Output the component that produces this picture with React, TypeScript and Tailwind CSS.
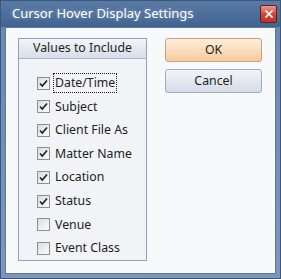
import { X } from "lucide-react";

const items = [
  { label: "Date/Time", checked: true, focused: true },
  { label: "Subject", checked: true },
  { label: "Client File As", checked: true },
  { label: "Matter Name", checked: true },
  { label: "Location", checked: true },
  { label: "Status", checked: true },
  { label: "Venue", checked: false },
  { label: "Event Class", checked: false },
];

const CheckBox = ({ checked }: { checked: boolean }) => (
  <div className="size-[13px] border border-[#8e8f8f] bg-gradient-to-br from-[#dcdcdc] to-[#fbfbfb] flex items-center justify-center">
    {checked && (
      <svg width="9" height="9" viewBox="0 0 9 9">
        <path d="M1 4.5 L3.3 7 L8 1.5" fill="none" stroke="#1f1f1f" strokeWidth="1.6" />
      </svg>
    )}
  </div>
);

export default function App() {
  return (
    <div
      className="w-[281px] h-[279px] flex flex-col bg-gradient-to-b from-[#6a87b0] to-[#7d97bc] border border-[#3c5678]"
      style={{ fontFamily: '"Noto Sans", "Open Sans", sans-serif' }}
    >
      <div className="h-[26px] flex items-center justify-between pl-[11px] pr-[3px] bg-gradient-to-b from-[#5a7aa6] to-[#40638f]">
        <span className="text-[13px] text-white [text-shadow:0_0_4px_rgba(255,255,255,0.4)]">
          Cursor Hover Display Settings
        </span>
        <div className="w-[17px] h-[18px] mb-[1px] rounded-[2px] border border-[#6e1b14] bg-gradient-to-b from-[#e89a8d] via-[#d2473a] to-[#c0322a] flex items-center justify-center">
          <X className="w-[12px] h-[12px] text-white" strokeWidth={3.5} />
        </div>
      </div>
      <div className="flex-1 mx-[4px] mb-[4px] bg-[#f7f9fb] border border-[#5f7699] flex gap-[18px] pl-[12px] pt-[10px]">
        <div className="w-[129px] h-[223px] border border-[#8ea2be] bg-[#f1f3f6] flex flex-col">
          <div className="h-[23px] border-b border-[#a8b6c9] bg-gradient-to-b from-[#f3f5f8] to-[#d7dee8] flex items-center justify-center text-[12.3px] text-[#1e1e1e]">
            Values to Include
          </div>
          <div className="pt-[12px] pl-[18px] flex flex-col">
            {items.map(({ label, checked, focused }) => (
              <div key={label} className="h-[23.6px] flex items-center gap-[4px]">
                <CheckBox checked={checked} />
                <span
                  className={`text-[12.3px] text-[#1e1e1e] leading-[16px] py-[1px] px-[1px] ${
                    focused ? "outline outline-1 outline-dotted outline-[#222]" : ""
                  }`}
                >
                  {label}
                </span>
              </div>
            ))}
          </div>
        </div>
        <div className="flex flex-col gap-[7px]">
          <button className="w-[97px] h-[24px] rounded-[3px] border border-[#c9a27a] bg-gradient-to-b from-[#fdeedf] to-[#f6cb9c] text-[12.3px] text-[#1e1e1e]">
            OK
          </button>
          <button className="w-[97px] h-[24px] rounded-[3px] border border-[#9eadc1] bg-gradient-to-b from-[#f2f4f8] to-[#d5dce7] text-[12.3px] text-[#1e1e1e]">
            Cancel
          </button>
        </div>
      </div>
    </div>
  );
}
